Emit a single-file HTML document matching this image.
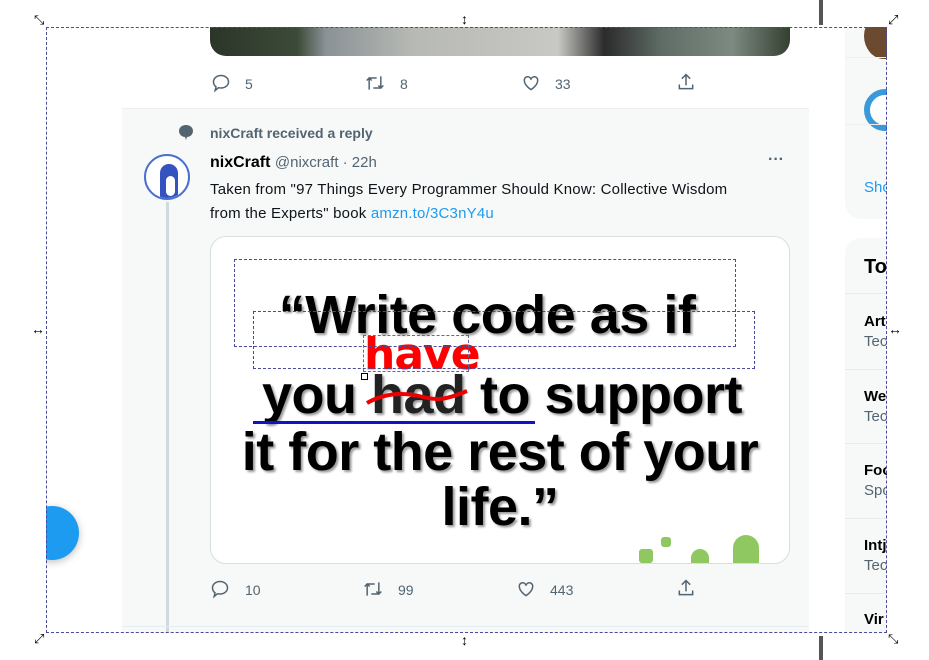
<!DOCTYPE html><html><head><style>
body{margin:0;width:929px;height:660px;background:#fff;position:relative;overflow:hidden;font-family:"Liberation Sans",sans-serif}
.a{position:absolute}
.clip{position:absolute;left:46px;top:27px;width:841px;height:606px;overflow:hidden}
.ic{color:#536471;font-size:14px}
.q{font-weight:bold;color:#000;font-size:54px;text-align:center;position:absolute;text-shadow:2px 2px 2px #999;letter-spacing:-0.5px;white-space:nowrap}
.dash{position:absolute;border:1px dashed #4a4a9a}
</style></head><body>
<div class="a" style="left:819px;top:0;width:4px;height:25px;background:#555"></div>
<div class="a" style="left:819px;top:636px;width:4px;height:24px;background:#555"></div>
<div class="clip">
 <div class="a" style="left:76px;top:0;width:687px;height:81px;background:#fff"></div>
 <div class="a" style="left:164px;top:-20px;width:580px;height:49px;border-radius:0 0 16px 16px;background:linear-gradient(90deg,#2b3528 0%,#3c4a38 15%,#8a9296 20%,#b7b9b4 35%,#c8c8c4 60%,#2b2b2b 68%,#5f6d66 78%,#7c8a82 90%,#34402f 100%)"></div>
 <div class="a" style="left:76px;top:81px;width:687px;height:530px;background:#f7f9f9;border-top:1px solid #eee"></div>
 <svg class="a" style="left:165px;top:46px" width="20" height="20" viewBox="0 0 24 24" fill="none" stroke="#536471" stroke-width="1.8"><path d="M12 3c5 0 9 3.4 9 7.6S17 18 12 18c-1 0-2-.1-3-.4L5 21l1-4.5C4 15 3 13 3 10.6 3 6.4 7 3 12 3z"/></svg>
 <div class="a ic" style="left:199px;top:49px">5</div>
 <svg class="a" style="left:318px;top:46px" width="22" height="20" viewBox="0 0 24 24" fill="none" stroke="#536471" stroke-width="1.8"><path d="M5 20V6h9M2 9l3-3 3 3M19 4v14h-9M16 15l3 3 3-3"/></svg>
 <div class="a ic" style="left:354px;top:49px">8</div>
 <svg class="a" style="left:474px;top:46px" width="22" height="20" viewBox="0 0 24 24" fill="none" stroke="#536471" stroke-width="1.8"><path d="M12 20s-8-5-8-11a4 4 0 0 1 8-1 4 4 0 0 1 8 1c0 6-8 11-8 11z"/></svg>
 <div class="a ic" style="left:509px;top:49px">33</div>
 <svg class="a" style="left:630px;top:45px" width="20" height="20" viewBox="0 0 24 24" fill="none" stroke="#536471" stroke-width="1.8"><path d="M12 3v13M7 8l5-5 5 5M4 15v5h16v-5"/></svg>
 <svg class="a" style="left:132px;top:97px" width="16" height="16" viewBox="0 0 16 16"><path d="M8 1c4 0 7 2.5 7 6s-3 6-6 6l-1 3-1-3C4 13 1 10.5 1 7s3-6 7-6z" fill="#536471"/></svg>
 <div class="a" style="left:164px;top:98px;font-size:14px;font-weight:bold;color:#536471">nixCraft received a reply</div>
 <div class="a" style="left:98px;top:127px;width:46px;height:46px;border-radius:50%;background:#fff;border:2px solid #4a6fd0;box-sizing:border-box;overflow:hidden"><div style="position:absolute;left:14px;top:8px;width:18px;height:36px;background:#3452c0;border-radius:9px 9px 4px 4px"></div><div style="position:absolute;left:20px;top:20px;width:9px;height:20px;background:#fff;border-radius:5px"></div></div>
 <div class="a" style="left:120px;top:175px;width:3px;height:440px;background:#cfd9de"></div>
 <div class="a" style="left:164px;top:127px;font-size:16px"><b>nixCraft</b> <span style="color:#536471;font-size:15px">@nixcraft · 22h</span></div>
 <div class="a" style="left:722px;top:124px;color:#536471;font-size:16px;font-weight:bold">···</div>
 <div class="a" style="left:164px;top:151px;font-size:15px;line-height:24px;color:#0f1419;width:590px;letter-spacing:0.2px;white-space:nowrap">Taken from "97 Things Every Programmer Should Know: Collective Wisdom<br>from the Experts" book <span style="color:#1d9bf0">amzn.to/3C3nY4u</span></div>
 <div class="a" style="left:164px;top:209px;width:578px;height:326px;background:#fff;border:1px solid #d8dee2;border-radius:16px;overflow:hidden">
  <div class="q" style="left:-13px;width:578px;top:47px">“Write code as if</div>
  <div class="q" style="left:51px;top:127px">you <span style="color:#222">had</span> to support</div>
  <div class="q" style="left:0;width:578px;top:184px">it for the rest of your</div>
  <div class="q" style="left:0;width:578px;top:239px">life.”</div>
  <div class="a" style="left:153px;top:92px;font-size:44px;font-weight:bold;color:#f00;font-family:'DejaVu Sans',sans-serif;letter-spacing:-1px">have</div>
  <svg class="a" style="left:152px;top:148px" width="110" height="24"><path d="M4 18 C25 6 45 8 60 12 S85 14 104 6" stroke="#e00" stroke-width="4" fill="none"/></svg>
  <div class="a" style="left:42px;top:184px;width:282px;height:2px;background:#11c;border-bottom:1px dashed #11c"></div>
  <div class="dash" style="left:23px;top:22px;width:500px;height:86px"></div>
  <div class="dash" style="left:42px;top:74px;width:500px;height:56px"></div>
  <div class="dash" style="left:152px;top:98px;width:104px;height:35px;border-color:#669"></div>
  <div class="a" style="left:150px;top:136px;width:5px;height:5px;border:1px solid #000;background:#fff"></div>
  <div class="a" style="left:522px;top:298px;width:26px;height:40px;border-radius:13px 13px 0 0;background:#8fc860"></div>
  <div class="a" style="left:480px;top:312px;width:18px;height:20px;border-radius:9px 9px 0 0;background:#8fc860"></div>
  <div class="a" style="left:428px;top:312px;width:14px;height:14px;background:#8fc860;border-radius:3px"></div>
  <div class="a" style="left:450px;top:300px;width:10px;height:10px;background:#8fc860;border-radius:3px"></div>
 </div>
 <svg class="a" style="left:164px;top:552px" width="20" height="20" viewBox="0 0 24 24" fill="none" stroke="#536471" stroke-width="1.8"><path d="M12 3c5 0 9 3.4 9 7.6S17 18 12 18c-1 0-2-.1-3-.4L5 21l1-4.5C4 15 3 13 3 10.6 3 6.4 7 3 12 3z"/></svg>
 <div class="a ic" style="left:199px;top:555px">10</div>
 <svg class="a" style="left:316px;top:552px" width="22" height="20" viewBox="0 0 24 24" fill="none" stroke="#536471" stroke-width="1.8"><path d="M5 20V6h9M2 9l3-3 3 3M19 4v14h-9M16 15l3 3 3-3"/></svg>
 <div class="a ic" style="left:352px;top:555px">99</div>
 <svg class="a" style="left:469px;top:552px" width="22" height="20" viewBox="0 0 24 24" fill="none" stroke="#536471" stroke-width="1.8"><path d="M12 20s-8-5-8-11a4 4 0 0 1 8-1 4 4 0 0 1 8 1c0 6-8 11-8 11z"/></svg>
 <div class="a ic" style="left:504px;top:555px">443</div>
 <svg class="a" style="left:630px;top:551px" width="20" height="20" viewBox="0 0 24 24" fill="none" stroke="#536471" stroke-width="1.8"><path d="M12 3v13M7 8l5-5 5 5M4 15v5h16v-5"/></svg>
 <div class="a" style="left:76px;top:599px;width:687px;height:1px;background:#e6ecf0"></div>
 <div class="a" style="left:-21px;top:479px;width:54px;height:54px;border-radius:50%;background:#1d9bf0;box-shadow:0 2px 8px rgba(0,0,0,.25)"></div>
 <div class="a" style="left:799px;top:-20px;width:60px;height:212px;background:#f7f9f9;border-radius:16px"></div>
 <div class="a" style="left:818px;top:-14px;width:40px;height:46px;border-radius:50%;background:#6b4a30"></div>
 <div class="a" style="left:799px;top:30px;width:60px;height:1px;background:#eee"></div>
 <div class="a" style="left:818px;top:62px;width:30px;height:30px;border-radius:50%;border:6px solid #3a9ad9;background:#fff"></div>
 <div class="a" style="left:799px;top:97px;width:60px;height:1px;background:#eee"></div>
 <div class="a" style="left:818px;top:152px;color:#1d9bf0;font-size:15px">Show</div>
 <div class="a" style="left:799px;top:211px;width:60px;height:420px;background:#f7f9f9;border-radius:16px"></div>
 <div class="a" style="left:818px;top:229px;font-size:20px;font-weight:bold">Top</div>
 <div class="a" style="left:818px;top:285px;font-size:15px;line-height:20px"><b>Art</b><br><span style="color:#536471">Tech</span></div>
 <div class="a" style="left:818px;top:360px;font-size:15px;line-height:20px"><b>Web</b><br><span style="color:#536471">Tech</span></div>
 <div class="a" style="left:818px;top:434px;font-size:15px;line-height:20px"><b>Food</b><br><span style="color:#536471">Spor</span></div>
 <div class="a" style="left:818px;top:509px;font-size:15px;line-height:20px"><b>Intj</b><br><span style="color:#536471">Tech</span></div>
 <div class="a" style="left:818px;top:584px;font-size:15px;font-weight:bold">Vir</div>
 <div class="a" style="left:799px;top:266px;width:60px;height:1px;background:#e6ecf0"></div>
 <div class="a" style="left:799px;top:342px;width:60px;height:1px;background:#e6ecf0"></div>
 <div class="a" style="left:799px;top:416px;width:60px;height:1px;background:#e6ecf0"></div>
 <div class="a" style="left:799px;top:491px;width:60px;height:1px;background:#e6ecf0"></div>
 <div class="a" style="left:799px;top:566px;width:60px;height:1px;background:#e6ecf0"></div>
</div>
<div class="a" style="left:46px;top:27px;width:841px;height:606px;border:1px dashed #4a4a9a;box-sizing:border-box"></div>
<div class="a" style="left:461px;top:11px;font-size:14px">↕</div>
<div class="a" style="left:461px;top:632px;font-size:14px">↕</div>
<div class="a" style="left:31px;top:321px;font-size:14px">↔</div>
<div class="a" style="left:888px;top:321px;font-size:14px">↔</div>
<div class="a" style="left:34px;top:12px;font-size:13px">⤡</div>
<div class="a" style="left:888px;top:12px;font-size:13px">⤢</div>
<div class="a" style="left:34px;top:631px;font-size:13px">⤢</div>
<div class="a" style="left:888px;top:631px;font-size:13px">⤡</div>
</body></html>
